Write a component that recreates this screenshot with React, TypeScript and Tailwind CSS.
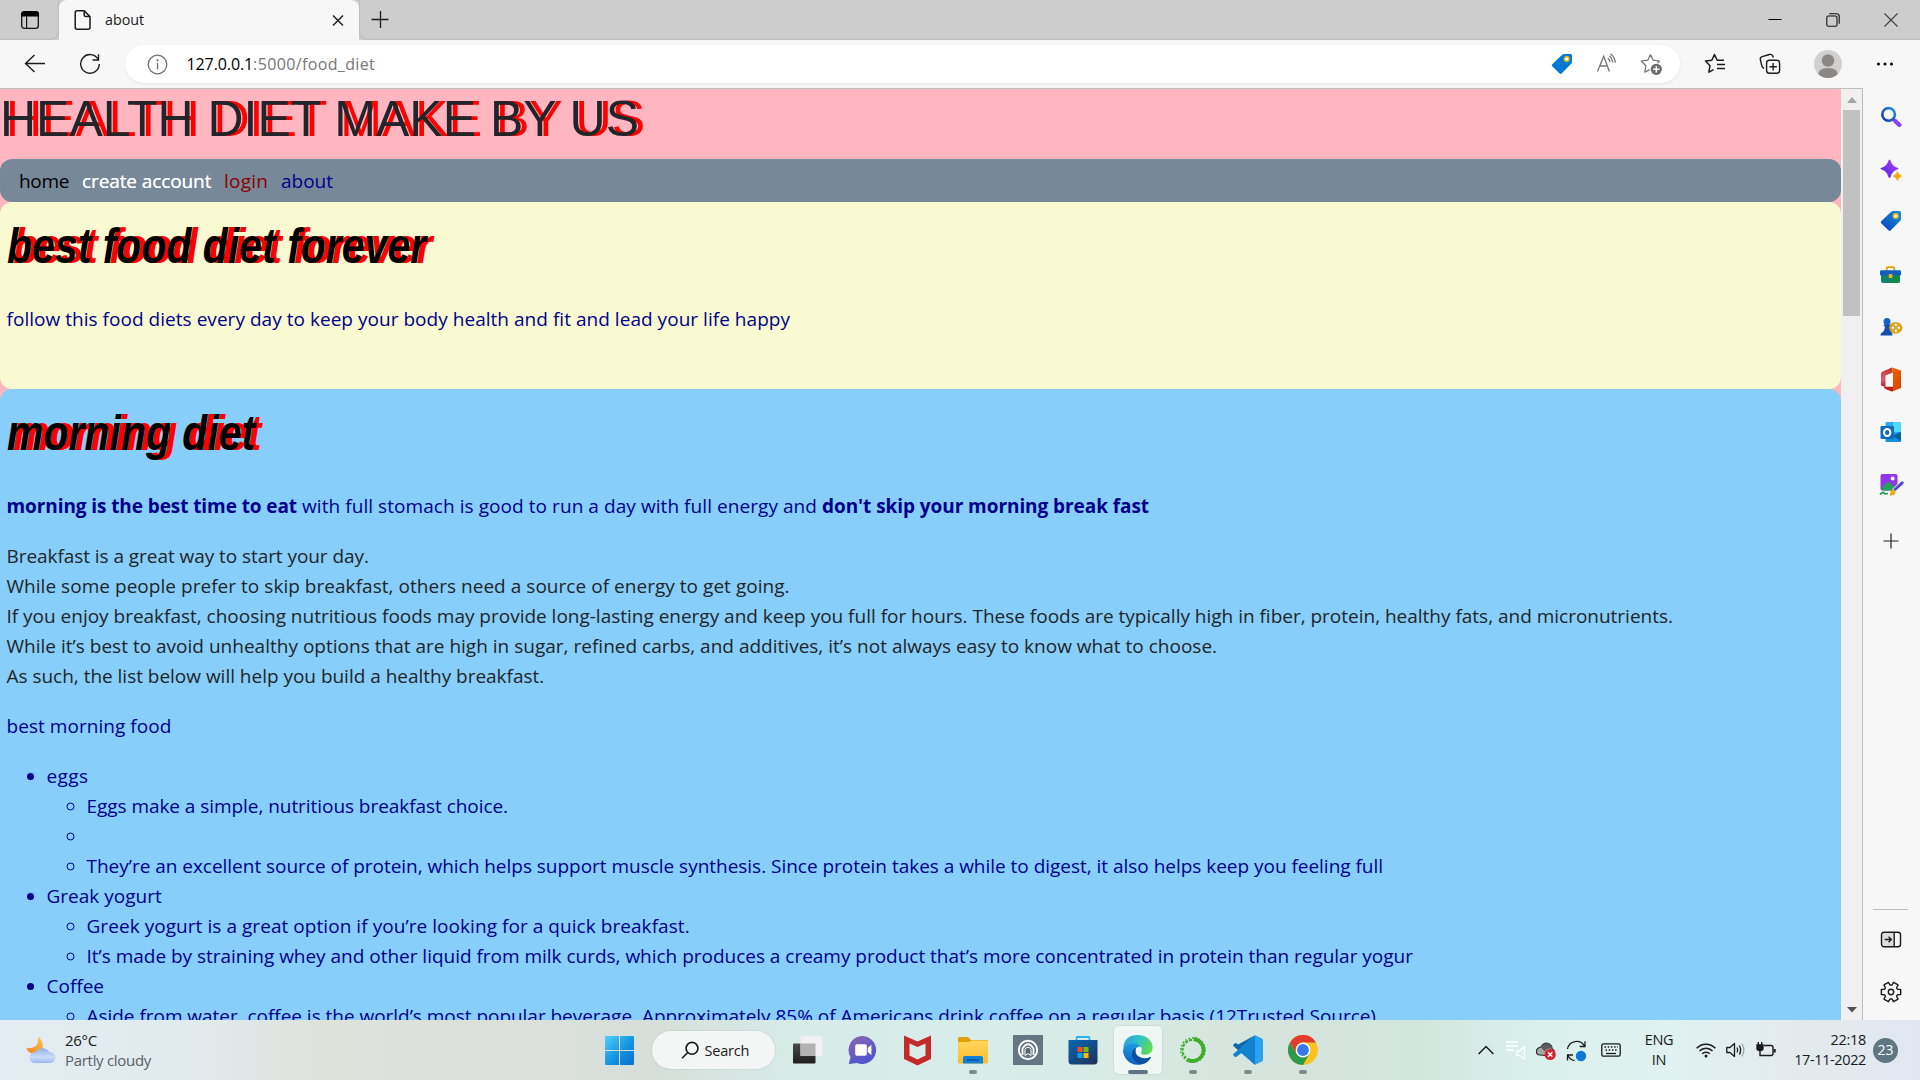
import type { ReactNode } from 'react';

const uiFont = "font-['Open_Sans','Noto_Sans',sans-serif]";

/* ---------- shared pieces ---------- */

function Tag({ from, to, id }: { from: string; to: string; id: string }) {
  return (
    <svg className="h-[22px] w-[22px]" viewBox="0 0 22 22">
      <defs>
        <linearGradient id={id} x1="0" y1="1" x2="1" y2="0">
          <stop offset="0" stopColor={from} />
          <stop offset="1" stopColor={to} />
        </linearGradient>
      </defs>
      <path d="M11.2 1.8Q12 1 13.2 1H19.5Q21 1 21 2.5V9Q21 10 20.2 10.8L10.6 20.6Q9.6 21.5 8.6 20.6L1.2 13.2Q.3 12.2 1.2 11.3Z" fill={`url(#${id})`} />
      <circle cx="15.7" cy="6" r="2.3" fill="#fff" stroke="#f5b70a" strokeWidth="1.5" />
    </svg>
  );
}

/* ---------- browser chrome ---------- */

function TabStrip() {
  return (
    <div className="flex h-10 shrink-0 items-stretch bg-[#cdcdcd]">
      <div className="flex w-[59px] items-center rounded-br-lg pl-[20px] shadow-[inset_-1px_-1px_1px_#bdbdbd]">
        <svg className="h-5 w-5" viewBox="0 0 20 20" fill="none">
          <rect x="1.7" y="1.7" width="16.6" height="16.6" rx="2.6" stroke="#111" strokeWidth="1.3" />
          <path d="M1.2 6.6V4Q1.2 1.2 4 1.2H16Q18.8 1.2 18.8 4V6.6Z" fill="#000" />
          <path d="M6.6 6V18" stroke="#111" strokeWidth="1.2" />
        </svg>
      </div>
      <div className="flex w-[300px] items-center rounded-t-lg bg-[#f7f7f7] pl-[15px]">
        <svg className="h-[22px] w-[18px]" viewBox="0 0 18 22" fill="none" stroke="#1b1b1b" strokeWidth="1.5" strokeLinejoin="round">
          <path d="M3.2 1.8H10.2L16 7.6V18.2Q16 20.2 14 20.2H3.2Q1.2 20.2 1.2 18.2V3.8Q1.2 1.8 3.2 1.8Z" />
          <path d="M10.2 1.8V6Q10.2 7.6 11.8 7.6H16" />
        </svg>
        <span className="ml-[13px] text-[14.3px] leading-5 text-[#1b1b1b]">about</span>
        <svg className="ml-auto mr-[15px] h-3 w-3" viewBox="0 0 12 12" stroke="#1b1b1b" strokeWidth="1.4">
          <path d="M1 1.5 11 11.5M11 1.5 1 11.5" />
        </svg>
      </div>
      <div className="flex flex-1 items-center rounded-bl-lg shadow-[inset_1px_-1px_1px_#bdbdbd]">
        <svg className="ml-[12px] h-[18px] w-[18px]" viewBox="0 0 18 18" stroke="#1b1b1b" strokeWidth="1.3">
          <path d="M9.5 0V17M.5 8.5H17.5" />
        </svg>
        <div className="ml-auto flex items-center gap-[44px] pr-[22px]">
          <svg className="h-[14px] w-[14px]" viewBox="0 0 14 14" stroke="#000" strokeWidth="1">
            <path d="M.5 6.5H13.5" />
          </svg>
          <svg className="h-[14px] w-[14px]" viewBox="0 0 14 14" fill="none" stroke="#111" strokeWidth="1.1">
            <rect x=".8" y="3" width="10.2" height="10.2" rx="1.5" />
            <path d="M3.2 .8H10.5Q13.2 .8 13.2 3.5V10.8" />
          </svg>
          <svg className="h-[14px] w-[14px]" viewBox="0 0 14 14" stroke="#444" strokeWidth="1.2">
            <path d="M.5 .5 13.5 13.5M13.5 .5 .5 13.5" />
          </svg>
        </div>
      </div>
    </div>
  );
}

const STAR =
  'M10.5 1.5 13.2 7.2 19.6 8.1M10.5 1.5 7.8 7.2 1.2 8.1 5.9 12.7 4.8 19.2 9.6 16.7';

function Toolbar() {
  return (
    <div className="flex h-12 shrink-0 items-center bg-[#f7f7f7]">
      <svg className="ml-[24px] h-[22px] w-[22px]" viewBox="0 0 22 22" fill="none" stroke="#1b1b1b" strokeWidth="1.4">
        <path d="M21 10.5H1.5M10.5 2 1.5 10.5 10.5 19" />
      </svg>
      <svg className="ml-[33px] h-[22px] w-[22px]" viewBox="0 0 22 22" fill="none" stroke="#1b1b1b" strokeWidth="1.4">
        <path d="M19.2 6.5A9.3 9.3 0 1 0 20.3 11" />
        <path d="M19.5 1.2V7H13.6" />
      </svg>
      <div className="ml-[24px] flex h-[38px] w-[1555px] items-center rounded-full bg-white shadow-[0_1px_3px_rgba(0,0,0,0.09)]">
        <svg className="ml-[22px] h-[21px] w-[21px]" viewBox="0 0 21 21" fill="none" stroke="#737373" strokeWidth="1.3">
          <circle cx="10.5" cy="10.5" r="9.3" />
          <path d="M10.5 9V15.3" />
          <circle cx="10.5" cy="6.3" r=".5" fill="#737373" />
        </svg>
        <span className="ml-[18.5px] text-[16px] leading-6 tracking-[-0.1px] text-black">127.0.0.1</span>
        <span className="text-[16px] leading-6 tracking-[0.36px] text-[#767676]">:5000/food_diet</span>
        <div className="ml-auto flex items-center pr-[17px]">
          <Tag id="tagBar" from="#0078d4" to="#0078d4" />
          <svg className="ml-[23px] h-[22px] w-[22px]" viewBox="0 0 22 22" fill="none" stroke="#767676" strokeWidth="1.3">
            <path d="M1.5 18.5 7.7 3.2 13.4 18.5M3.7 13H11.4" />
            <path d="M11.8 5Q13.6 6.6 14 9.2M13.4 2.8Q16.2 5.2 16.8 9.4M14.6 .8Q18.6 4 19.4 9.6" />
          </svg>
          <svg className="ml-[22px] h-[23px] w-[23px]" viewBox="0 0 23 23" fill="none" stroke="#767676" strokeWidth="1.3" strokeLinejoin="round">
            <path d={STAR} />
            <path d="M19.6 8.1 17.6 10" />
            <circle cx="16.3" cy="16.3" r="5.6" fill="#6e6e6e" stroke="none" />
            <path d="M16.3 13.2V19.4M13.2 16.3H19.4" stroke="#fff" strokeWidth="1.5" />
          </svg>
        </div>
      </div>
      <svg className="ml-[24px] h-[22px] w-[22px]" viewBox="0 0 22 22" fill="none" stroke="#1b1b1b" strokeWidth="1.5" strokeLinejoin="round">
        <path d="M20 7.2H13.2L10.5 1.5 7.8 7.2 1.5 8.1 6 12.7 4.9 19.2 9.6 16.7M13 11.5H21M13 15.5H21" />
      </svg>
      <svg className="ml-[33px] h-[22px] w-[22px]" viewBox="0 0 22 22" fill="none" stroke="#1b1b1b" strokeWidth="1.4">
        <rect x="7.6" y="7.2" width="13" height="13" rx="2.8" />
        <path d="M14.1 10V17.5M10.4 13.7H17.8" />
        <path d="M5.2 15.4Q3.4 15 2.8 12.6L1.4 6.8Q.9 4.4 3.2 3.7L10.4 1.5Q13 .9 13.9 3.3L14.3 4.6" />
      </svg>
      <svg className="ml-[33px] h-7 w-7" viewBox="0 0 28 28">
        <circle cx="14" cy="14" r="14" fill="#d2d0ce" />
        <circle cx="14" cy="10.5" r="6.2" fill="#8a8785" />
        <path d="M4.2 24Q5 18 14 18T23.8 24A14 14 0 0 1 4.2 24Z" fill="#8a8785" />
      </svg>
      <svg className="ml-[34px] h-1 w-[18px]" viewBox="0 0 18 4" fill="#111">
        <circle cx="2.5" cy="2" r="1.6" />
        <circle cx="9" cy="2" r="1.6" />
        <circle cx="15.5" cy="2" r="1.6" />
      </svg>
    </div>
  );
}

/* ---------- web page ---------- */

function SectionTitle({ children }: { children: ReactNode }) {
  return (
    <h1 className="h-[60px] text-black">
      <span className="inline-block origin-left scale-x-[0.82] whitespace-nowrap font-['Liberation_Sans',Arial,sans-serif] text-[50px] font-bold italic leading-[60px] [text-shadow:7.6px_0_0_red]">
        {children}
      </span>
    </h1>
  );
}

function SubList({ children }: { children: ReactNode }) {
  return <ul className="list-[circle] pl-10">{children}</ul>;
}

function PageContent() {
  return (
    <div className="flex-1 overflow-hidden bg-[#ffb6c1] text-[19px] leading-[30px] text-[#212529]">
      <h1 className="h-[70px] whitespace-nowrap font-['Liberation_Sans',Arial,sans-serif] text-[50px] leading-[60px] [text-shadow:6px_0_0_red]">
        HEALTH DIET MAKE BY US
      </h1>
      <nav className="flex h-[43px] items-center gap-[13px] rounded-[12px] bg-[#778899] pl-[19px]">
        <a className="w-[50px] tracking-[-0.3px] text-black">home</a>
        <a className="w-[129px] whitespace-nowrap tracking-[-0.1px] text-white [text-shadow:0_0_0.5px_white]">create account</a>
        <a className="w-[44px] tracking-[0.2px] text-[#8b0000]">login</a>
        <a className="text-[#00008b]">about</a>
      </nav>
      <section className="h-[187px] rounded-[12px] bg-[#fafad2] pl-[6.5px] pt-[14px] text-[#00008b]">
        <SectionTitle>best food diet forever</SectionTitle>
        <p className="mt-[28px] whitespace-nowrap tracking-[0.034px]">
          follow this food diets every day to keep your body health and fit and lead your life happy
        </p>
      </section>
      <section className="h-[700px] whitespace-nowrap rounded-[12px] bg-[#87cefa] pl-[6.5px] pt-[14px] text-[#00008b]">
        <SectionTitle>morning diet</SectionTitle>
        <p className="mt-[28px] tracking-[0.065px]">
          <b className="font-bold tracking-[-0.087px]">morning is the best time to eat</b> with full stomach is good to run a day with full energy and{' '}
          <b className="font-bold tracking-[-0.065px]">don't skip your morning break fast</b>
        </p>
        <div className="mt-5 text-[#212529]">
          <p className="tracking-[-0.06px]">Breakfast is a great way to start your day.</p>
          <p className="tracking-[0.036px]">While some people prefer to skip breakfast, others need a source of energy to get going.</p>
          <p className="tracking-[-0.012px]">
            If you enjoy breakfast, choosing nutritious foods may provide long-lasting energy and keep you full for hours. These foods are typically high in fiber, protein, healthy fats, and micronutrients.
          </p>
          <p className="tracking-[0.01px]">While it’s best to avoid unhealthy options that are high in sugar, refined carbs, and additives, it’s not always easy to know what to choose.</p>
          <p className="tracking-[-0.02px]">As such, the list below will help you build a healthy breakfast.</p>
        </div>
        <p className="mt-5 tracking-[0.05px]">best morning food</p>
        <ul className="mt-5 list-disc pl-10">
          <li>
            <span className="tracking-[0.4px]">eggs</span>
            <SubList>
              <li className="tracking-[-0.055px]">Eggs make a simple, nutritious breakfast choice.</li>
              <li className="h-[30px]" />
              <li className="tracking-[-0.024px]">
                They’re an excellent source of protein, which helps support muscle synthesis. Since protein takes a while to digest, it also helps keep you feeling full
              </li>
            </SubList>
          </li>
          <li>
            Greak yogurt
            <SubList>
              <li className="tracking-[0.055px]">Greek yogurt is a great option if you’re looking for a quick breakfast.</li>
              <li className="tracking-[-0.018px]">
                It’s made by straining whey and other liquid from milk curds, which produces a creamy product that’s more concentrated in protein than regular yogur
              </li>
            </SubList>
          </li>
          <li>
            Coffee
            <SubList>
              <li className="tracking-[-0.031px]">
                Aside from water, coffee is the world’s most popular beverage. Approximately 85% of Americans drink coffee on a regular basis (12Trusted Source)
              </li>
            </SubList>
          </li>
        </ul>
      </section>
    </div>
  );
}

function Scrollbar() {
  return (
    <div className="flex w-[21px] shrink-0 flex-col items-center bg-[#f0f0f0]">
      <svg className="mt-[8px] h-[6px] w-[10px]" viewBox="0 0 10 6" fill="#a3a3a3">
        <path d="M0 6 5 0 10 6Z" />
      </svg>
      <div className="mt-[7px] h-[206px] w-[17px] bg-[#c1c1c1]" />
      <svg className="mb-[7px] mt-auto h-[6px] w-[10px]" viewBox="0 0 10 6" fill="#505050">
        <path d="M0 0 5 5.5 10 0Z" />
      </svg>
    </div>
  );
}

/* ---------- right sidebar ---------- */

const sidebarIcons: ReactNode[] = [
  <svg className="mt-[1px] h-[22px] w-[22px]" viewBox="0 0 22 22" fill="none">
    <defs>
      <linearGradient id="lens" x1="0" y1="1" x2="1" y2="0">
        <stop stopColor="#0a35c8" />
        <stop offset="1" stopColor="#2b8fd0" />
      </linearGradient>
    </defs>
    <circle cx="8.6" cy="8.4" r="6.3" stroke="url(#lens)" strokeWidth="2.6" fill="#f3fbff" />
    <path d="M13.4 13.2 15.4 15" stroke="#3b3a50" strokeWidth="2.4" />
    <path d="M15.2 14.9 19.4 18.9" stroke="#8a3ffc" strokeWidth="4.2" strokeLinecap="round" />
  </svg>,
  <svg className="mt-[2px] h-[24px] w-[24px]" viewBox="0 0 24 24">
    <defs>
      <linearGradient id="spark" x1="0" y1="1" x2="1" y2="0">
        <stop stopColor="#4a2be0" />
        <stop offset="1" stopColor="#b43df5" />
      </linearGradient>
    </defs>
    <path d="M10.5 1.5Q11.3 1.5 11.8 3.2 13 8 18.4 9.8 20.8 10.6 18.4 11.6 13.2 13.3 12 18 11.4 20 10.5 20T9 18Q7.8 13.3 2.6 11.6 .2 10.7 2.6 9.8 8 8 9.2 3.2 9.7 1.5 10.5 1.5Z" fill="url(#spark)" />
    <path d="M18.4 13.5Q19 16.6 22.8 18 19.2 19.2 18.4 22.5 17.5 19.2 14 18 17.7 16.6 18.4 13.5Z" fill="#f2a900" stroke="#f2a900" strokeWidth=".6" />
  </svg>,
  <Tag id="tagSide" from="#0a3fc4" to="#1890d4" />,
  <svg className="mt-[2px] h-[20px] w-[23px]" viewBox="0 0 23 20">
    <path d="M7.7 6V3.5Q7.7 2.2 9 2.2H14Q15.3 2.2 15.3 3.5V6" stroke="#e3a008" strokeWidth="1.8" fill="none" />
    <path d="M2 9H21V16Q21 18 19 18H4Q2 18 2 16Z" fill="#10836a" />
    <path d="M12 9H21V16Q21 18 19 18H12Z" fill="#128a4a" />
    <rect x="1" y="5.3" width="21" height="5.2" rx="1.2" fill="#1160bd" />
    <rect x="9.8" y="9" width="3.6" height="4" rx=".8" fill="#f2b01e" />
  </svg>,
  <svg className="mt-[1px] h-[20px] w-[24px]" viewBox="0 0 24 20">
    <ellipse cx="16.5" cy="10.8" rx="7" ry="5.9" fill="#dda21f" />
    <g fill="#fff">
      <circle cx="16.8" cy="7.8" r="1.2" />
      <circle cx="16.8" cy="13.7" r="1.2" />
      <circle cx="13.9" cy="10.7" r="1.2" />
      <circle cx="19.7" cy="10.7" r="1.2" />
    </g>
    <circle cx="8" cy="4.5" r="3.5" fill="#1761c4" />
    <path d="M4.8 7.5H11.2V9.3H10Q10.2 13 12 15 13.5 15.5 13.5 18.5H1.5Q1.5 15.5 4 15 5.8 13 6 9.3H4.8Z" fill="#124fae" />
  </svg>,
  <svg className="mt-[2px] h-[25px] w-[22px]" viewBox="0 0 22 25">
    <defs>
      <linearGradient id="office" x1="0" y1="0" x2="0" y2="1">
        <stop stopColor="#c8301a" />
        <stop offset=".6" stopColor="#d9607a" />
        <stop offset="1" stopColor="#b81f1a" />
      </linearGradient>
      <linearGradient id="officeR" x1="0" y1="0" x2="1" y2="1">
        <stop stopColor="#f07800" />
        <stop offset="1" stopColor="#d83b01" />
      </linearGradient>
    </defs>
    <path d="M12 .5 2.7 4.5Q1 5.3 1 7V18.5L5.5 20V8.5L13 5.5Z" fill="url(#office)" />
    <path d="M12 .5 21 3.6V21L12 24.5 5 21.5H13V5Z" fill="url(#officeR)" />
    <path d="M4 19.8H13V24.3H11L4.5 21.5Z" fill="#b8201c" />
  </svg>,
  <svg className="mt-[1px] h-[22px] w-[22px]" viewBox="0 0 22 22">
    <rect x="5.5" y="1" width="15.5" height="17" rx="1" fill="#28a8ea" />
    <path d="M13 1H20Q21 1 21 2V11H13Z" fill="#50d9ff" />
    <path d="M5.5 14 21 11V20Q21 21 20 21H6.5Q5.5 21 5.5 20Z" fill="#1490df" />
    <path d="M13 15 21 11V20Z" fill="#0a5ea8" />
    <rect x="0.5" y="5" width="13.5" height="13" rx="1.2" fill="#0f6cbd" />
    <ellipse cx="7.2" cy="11.5" rx="3.2" ry="3.5" fill="none" stroke="#fff" strokeWidth="2" />
  </svg>,
  <svg className="ml-[1px] mt-[2px] h-[24px] w-[25px]" viewBox="0 0 25 24">
    <rect x="1.5" y="1" width="17" height="16.5" rx="2" fill="#9333ea" />
    <path d="M2.5 15 7.5 10Q9.5 8.5 11.5 10L16 14.5V17.5H3.5Z" fill="#22a35a" />
    <circle cx="13.7" cy="5.5" r="2" fill="#fff" />
    <path d="M23 10 15 18" stroke="#f7f7f7" strokeWidth="5" />
    <path d="M23.2 9.8 16 16.5" stroke="#5546d8" strokeWidth="3" strokeLinecap="round" />
    <path d="M13.5 16.5Q16.5 16.5 16.5 19.5 16 23 10.5 22.5 11.5 17.5 13.5 16.5Z" fill="#f2a51e" />
    <path d="M1 21.5Q4 18.5 5 20T9 20.5" stroke="#16a34a" strokeWidth="1.8" fill="none" />
  </svg>,
  <svg className="mt-[9px] h-4 w-4" viewBox="0 0 16 16" stroke="#222" strokeWidth="1.2">
    <path d="M8 .5V15.5M.5 8H15.5" />
  </svg>,
];

function gearPath() {
  const pts: string[] = [];
  for (let i = 0; i < 6; i++) {
    const a = (i * 60 * Math.PI) / 180 + Math.PI / 6;
    const at = (r: number, off: number) =>
      `${(11 + r * Math.sin(a + off)).toFixed(2)} ${(11 - r * Math.cos(a + off)).toFixed(2)}`;
    pts.push(at(7, -0.4), at(10, -0.26), at(10, 0.26), at(7, 0.4));
  }
  return `M${pts.join('L')}Z`;
}

function Sidebar() {
  return (
    <aside className="flex w-[57px] shrink-0 flex-col items-center bg-[#f7f7f7] pr-[2px]">
      <div className="mt-[2px] flex flex-col">
        {sidebarIcons.map((icon, i) => (
          <div key={i} className="flex h-[52.5px] w-[55px] items-center justify-center">
            {icon}
          </div>
        ))}
      </div>
      <div className="mt-auto h-px w-[35px] bg-[#bcbcbc]" />
      <svg className="mt-[21px] h-[17px] w-[22px]" viewBox="0 0 22 17" fill="none">
        <rect x="1.5" y="1.2" width="12.5" height="14.5" rx="2" fill="#ddd" />
        <rect x="1.5" y="1.2" width="19" height="14.5" rx="2.5" stroke="#1b1b1b" strokeWidth="1.4" />
        <path d="M14.2 1V16M4.8 8.5H11.2M8.6 5.8 11.3 8.5 8.6 11.2" stroke="#1b1b1b" strokeWidth="1.4" />
      </svg>
      <svg className="mb-[17px] mt-[33px] h-[22px] w-[22px]" viewBox="0 0 22 22" fill="none" stroke="#1b1b1b" strokeWidth="1.4" strokeLinejoin="round">
        <path d={gearPath()} />
        <circle cx="11" cy="11" r="2.7" />
      </svg>
    </aside>
  );
}

/* ---------- taskbar ---------- */

type TaskApp = { name: string; icon: ReactNode; running?: boolean; active?: boolean };

const apps: TaskApp[] = [
  {
    name: 'Task view',
    icon: (
      <svg className="h-[30px] w-[30px]" viewBox="0 0 30 30">
        <defs>
          <linearGradient id="tvDark" x1="0" y1="0" x2="0" y2="1">
            <stop stopColor="#4a4a48" />
            <stop offset="1" stopColor="#1e1e1e" />
          </linearGradient>
        </defs>
        <rect x="0" y="8.5" width="22.5" height="20" rx="1" fill="url(#tvDark)" />
        <rect x="7.5" y="1" width="22" height="20" rx="1" fill="#f1f1f1" />
        <rect x="7.5" y="8.5" width="15" height="12.5" fill="#b2b2b2" />
      </svg>
    ),
  },
  {
    name: 'Chat',
    icon: (
      <svg className="h-[30px] w-[30px]" viewBox="0 0 30 30">
        <defs>
          <linearGradient id="chat" x1="0" y1="0" x2=".5" y2="1">
            <stop stopColor="#8a66b0" />
            <stop offset="1" stopColor="#4f55cf" />
          </linearGradient>
        </defs>
        <path d="M15 1A14 14 0 1 1 9 28L1.500 29Q.5 29 1 28L2.500 22A14 14 0 0 1 15 1Z" fill="url(#chat)" />
        <rect x="7.2" y="9.2" width="11.6" height="11.6" rx="1.8" fill="#fff" />
        <path d="M19.8 13 23.4 9.8V20.2L19.8 17Z" fill="#fff" />
      </svg>
    ),
  },
  {
    name: 'McAfee',
    icon: (
      <svg className="h-[31px] w-[27px]" viewBox="0 0 27 31">
        <path d="M0 .5 13.5 6.5 27 .5V24L13.5 30.5 0 24Z" fill="#c32b2b" />
        <path d="M5.5 8.5 13.5 12 21.5 8.5V20.5L13.5 24.5 5.5 20.5Z" fill="#d9ece9" />
      </svg>
    ),
  },
  {
    name: 'Explorer',
    running: true,
    icon: (
      <svg className="h-[28px] w-[30px]" viewBox="0 0 30 28">
        <defs>
          <linearGradient id="folder" x1="0" y1="0" x2="0" y2="1">
            <stop stopColor="#ffd65e" />
            <stop offset="1" stopColor="#fbbc2c" />
          </linearGradient>
        </defs>
        <path d="M0 2Q0 1 1 1H10L13 4H29Q30 4 30 5V10H0Z" fill="#e0a008" />
        <path d="M0 6H11L14 4.5H29Q30 4.5 30 5.5V26Q30 27.5 28.5 27.5H1.5Q0 27.5 0 26Z" fill="url(#folder)" />
        <path d="M5 27.5V22Q5 20 7 20H23Q25 20 25 22V27.5Z" fill="#1180d8" />
        <path d="M9 24H21" stroke="#0a4f94" strokeWidth="1.5" />
      </svg>
    ),
  },
  {
    name: 'Headset',
    icon: (
      <svg className="h-[30px] w-[30px]" viewBox="0 0 30 30">
        <rect width="30" height="30" fill="#637682" />
        <circle cx="15" cy="15" r="9.2" fill="none" stroke="#fff" strokeWidth="1.9" />
        <path d="M9.5 20V13.5L12 10.500Q15 8 18 10.500L20.500 13.500V20" fill="none" stroke="#fff" strokeWidth="1.8" />
        <path d="M12 20.500V14.500Q12 12.500 15 12.500T18 14.500V20.500L15 18.500Z" fill="#52646f" stroke="#fff" strokeWidth="1" />
      </svg>
    ),
  },
  {
    name: 'Store',
    icon: (
      <svg className="h-[30px] w-[30px]" viewBox="0 0 30 30">
        <defs>
          <linearGradient id="store" x1="0" y1="0" x2=".8" y2="1">
            <stop stopColor="#0669b8" />
            <stop offset="1" stopColor="#20335e" />
          </linearGradient>
        </defs>
        <path d="M8.5 6V3Q8.5 2 9.5 2H20.5Q21.5 2 21.5 3V6" fill="none" stroke="#28b4f0" strokeWidth="1.8" />
        <path d="M.5 5H29.5V26Q29.5 29.5 26 29.5H4Q.5 29.5 .5 26Z" fill="url(#store)" />
        <rect x="9.5" y="12" width="5" height="5" fill="#f25022" />
        <rect x="15.5" y="12" width="5" height="5" fill="#7fba00" />
        <rect x="9.5" y="18" width="5" height="5" fill="#00a4ef" />
        <rect x="15.5" y="18" width="5" height="5" fill="#ffb900" />
      </svg>
    ),
  },
  {
    name: 'Edge',
    running: true,
    active: true,
    icon: (
      <svg className="h-[30px] w-[30px]" viewBox="0 0 30 30">
        <defs>
          <linearGradient id="edgeTop" x1="0" y1=".3" x2="1" y2=".6">
            <stop stopColor="#2a9fe0" />
            <stop offset=".5" stopColor="#33c4c0" />
            <stop offset="1" stopColor="#62dd4c" />
          </linearGradient>
          <linearGradient id="edgeLeft" x1="0" y1="0" x2="0" y2="1">
            <stop stopColor="#1f9be4" />
            <stop offset="1" stopColor="#0b62bd" />
          </linearGradient>
        </defs>
        <path d="M.2 13Q1.5 0 15 0 24 0 28.2 7 31.5 14 27.5 17.8 24 21 19 19.2 17.5 18.5 18.3 17 20 13.5 17 11 12 7.5 6 8.5 2 9.5 .2 13Z" fill="url(#edgeTop)" />
        <path d="M0 15.5Q.5 8 9 8 15.5 8.3 17.8 11.6 11 12 11 18.5 11.5 26 19 29.3 9 31.5 3 24 -.2 19.5 0 15.5Z" fill="url(#edgeLeft)" />
        <path d="M11.5 13.5Q8 17 9.5 22 12.5 28.8 19 29.3 25 28 28 22.5 28.3 21.5 27.3 21.9 21 25 15 21 11.5 18 13 13 12 13 11.5 13.5Z" fill="#0c4fa0" />
      </svg>
    ),
  },
  {
    name: 'Anaconda',
    running: true,
    icon: (
      <svg className="h-[28px] w-[28px]" viewBox="0 0 28 28" fill="none" stroke="#3fae29">
        <path d="M14.5 3A11 11 0 1 1 8 23.5" strokeWidth="3.8" />
        <circle cx="14" cy="14" r="12.2" strokeWidth="1.6" strokeDasharray="1.5 2" />
        <path d="M13 3.8A10.4 10.4 0 0 0 7 22" strokeWidth="2.2" strokeDasharray="3 1.3" />
      </svg>
    ),
  },
  {
    name: 'Code',
    running: true,
    icon: (
      <svg className="h-[30px] w-[30px]" viewBox="0 0 30 30">
        <path d="M22 .3 8.8 12.3 3.5 8.3Q2.5 7.7 1.5 8.5L.5 9.5Q-.2 10.3.6 11.2L22 29.7V21.5L5 9.5Z" fill="#0a68b0" />
        <path d="M22 29.7 8.8 17.7 3.5 21.7Q2.5 22.3 1.5 21.5L.5 20.5Q-.2 19.7.6 18.8L22 .3V8.5Z" fill="#1282cf" />
        <path d="M22 .3 29 3.5Q30 4 30 5.2V24.8Q30 26 29 26.5L22 29.7Z" fill="#2aa2f2" />
      </svg>
    ),
  },
  {
    name: 'Chrome',
    running: true,
    icon: (
      <svg className="h-[30px] w-[30px]" viewBox="0 0 30 30">
        <circle cx="15" cy="15" r="15" fill="#fcc31e" />
        <path d="M2 7.5A15 15 0 0 0 15 30L21.5 18.8 8.5 18.8Z" fill="#2b9a4b" />
        <path d="M2 7.5A15 15 0 0 1 28 7.5H15L8.5 18.8Z" fill="#e33b2e" />
        <circle cx="15" cy="15" r="7.4" fill="#fff" />
        <circle cx="15" cy="15" r="5.9" fill="#3579ea" />
      </svg>
    ),
  },
];

function Taskbar() {
  return (
    <footer className="flex h-[60px] shrink-0 items-center bg-[linear-gradient(90deg,#e3ecf2_0%,#e1eaed_10%,#dfe1db_17%,#dde0da_26%,#d6dfda_34%,#d7ece8_42%,#d8ede9_50%,#d8ebe5_58%,#d5e4dc_66%,#d3e6de_74%,#daf0ec_80%,#dff1f0_87%,#e3ebee_93%,#e1e7f1_100%)] text-[#1b1b1b]">
      <div className="flex w-[605px] items-center pl-[26px]">
        <svg className="h-[28px] w-[30px]" viewBox="0 0 30 28">
          <defs>
            <linearGradient id="moon" x1="0" y1="1" x2="1" y2="0">
              <stop stopColor="#f08418" />
              <stop offset="1" stopColor="#fbc558" />
            </linearGradient>
            <linearGradient id="cloud" x1="0" y1="0" x2="0" y2="1">
              <stop stopColor="#8fb0ec" />
              <stop offset=".6" stopColor="#cddcf8" />
              <stop offset="1" stopColor="#9bb8ee" />
            </linearGradient>
          </defs>
          <path d="M12 1Q13 8 9 10.5 5 13 .3 12 2 17.5 8 17.8 16 17.5 17 10 16.5 3.5 12 1Z" fill="url(#moon)" />
          <path d="M9 27A5.5 5.5 0 0 1 9 16H9.8A8 8 0 0 1 23.5 16.2 5.4 5.4 0 0 1 24.500 27Z" fill="url(#cloud)" />
        </svg>
        <div className="ml-[9px] text-[15px] leading-5">
          <p className="tracking-[-0.3px]">26°C</p>
          <p className="tracking-[-0.3px] text-[#5c6164]">Partly cloudy</p>
        </div>
      </div>
      <svg className="mt-px h-[29px] w-[29px]" viewBox="0 0 29 29">
        <defs>
          <linearGradient id="win" x1="0" y1="0" x2="1" y2="1">
            <stop stopColor="#52d0fb" />
            <stop offset=".55" stopColor="#1492df" />
            <stop offset="1" stopColor="#0a6fd0" />
          </linearGradient>
        </defs>
        <path d="M1 0H14V14H0V1Q0 0 1 0ZM15 0H28Q29 0 29 1V14H15ZM0 15H14V29H1Q0 29 0 28ZM15 15H29V28Q29 29 28 29H15Z" fill="url(#win)" />
      </svg>
      <div className="ml-[18px] flex h-[38px] w-[123px] items-center rounded-full bg-[#f3f6f5] pl-[28.5px] shadow-[0_0_1px_1px_rgba(0,0,0,0.05)]">
        <svg className="h-[18px] w-[18px]" viewBox="0 0 18 18" fill="none" stroke="#1b1b1b" strokeWidth="1.6">
          <circle cx="11" cy="7.3" r="5.9" />
          <path d="M6.8 11.5 1 17.2" />
        </svg>
        <span className="ml-[6px] pt-[2px] text-[14.5px] tracking-[-0.2px]">Search</span>
      </div>
      <div className="ml-[5px] flex">
        {apps.map((app) => (
          <div key={app.name} className="flex w-[55px] justify-center">
            <div
              className={
                app.active
                  ? 'relative flex h-[48px] w-[48px] items-center justify-center rounded-[5px] bg-[#eff7f5] shadow-[0_0_1px_1px_rgba(0,0,0,0.05)]'
                  : 'relative flex h-[48px] w-[48px] items-center justify-center'
              }
            >
              {app.icon}
              {app.running && (
                <span
                  className={
                    app.active
                      ? 'absolute bottom-0 left-[14px] h-1 w-5 rounded-full bg-[#5f7585]'
                      : 'absolute bottom-0 left-5 h-1 w-2 rounded-full bg-[#808a88]'
                  }
                />
              )}
            </div>
          </div>
        ))}
      </div>
      <div className="ml-auto flex items-center pr-[22px]">
        <svg className="h-[10px] w-[16px]" viewBox="0 0 16 10" fill="none" stroke="#1b1b1b" strokeWidth="1.5">
          <path d="M.6 9 8 1.5 15.4 9" />
        </svg>
        <svg className="ml-[12px] h-[20px] w-[20px]" viewBox="0 0 20 20" fill="none" stroke="#fff" strokeWidth="1.3">
          <path d="M0 2H12M0 6H12M0 10H8M11 11H13.5L18.5 6.5V19L13.5 15.5H11Z" />
        </svg>
        <svg className="ml-[10px] mt-[2px] h-[20px] w-[20px]" viewBox="0 0 20 20">
          <path d="M4 14Q0 14 .5 9.5 1.5 6.5 5 6 8 1 12.5 2.5 16 4 16 7.5 19 9 18 13L14 15Z" fill="#a8a8a8" stroke="#2a2a2a" strokeWidth="1.2" />
          <path d="M5 6Q8 1 12.5 2.5 16 4 16 7.5 10 7 8.5 10.5Z" fill="#5c5c5c" />
          <circle cx="14.2" cy="13.5" r="5.6" fill="#d9202e" />
          <path d="M12 11.3 16.4 15.7M16.4 11.3 12 15.7" stroke="#fff" strokeWidth="1.5" />
        </svg>
        <svg className="ml-[10px] mt-[1px] h-[22px] w-[21px]" viewBox="0 0 21 22" fill="none" stroke="#1b1b1b" strokeWidth="1.3">
          <path d="M1.5 9A9.2 9.2 0 0 1 18.5 6M19 1.2V6.5H13.7M1.5 20.5V15H7M2 15.5Q4 19.8 8.5 20.6" />
          <circle cx="15" cy="16" r="5.2" fill="#0a78d4" stroke="none" />
        </svg>
        <svg className="ml-[14px] h-[14px] w-[20px]" viewBox="0 0 20 14" fill="none" stroke="#1b1b1b" strokeWidth="1.3">
          <rect x=".8" y=".8" width="18.4" height="12.4" rx="1.6" />
          <path d="M3.5 4H17M4.5 7H16.5" strokeDasharray="1.5 1.7" />
          <path d="M5 10.5H15" />
        </svg>
        <div className="ml-[14px] w-[48px] text-center text-[14.5px] leading-5 tracking-[-0.3px]">
          <p>ENG</p>
          <p>IN</p>
        </div>
        <svg className="ml-[13px] h-[16px] w-[20px]" viewBox="0 0 20 16" fill="none" stroke="#1b1b1b" strokeWidth="1.5">
          <path d="M.6 6.2A13 13 0 0 1 19.4 6.2M3.5 9A9 9 0 0 1 16.5 9M6.2 11.8A5.3 5.3 0 0 1 13.8 11.8" />
          <circle cx="10" cy="13.9" r="1.5" fill="#1b1b1b" stroke="none" />
        </svg>
        <svg className="ml-[10px] h-[18px] w-[20px]" viewBox="0 0 20 18" fill="none" stroke="#1b1b1b" strokeWidth="1.3">
          <path d="M.8 6.5H4L8.5 2.5V15.5L4 11.5H.8Z" strokeLinejoin="round" />
          <path d="M11 6.5Q12.5 9 11 11.5M13.3 4.5Q16 9 13.3 13.5" />
          <path d="M15.7 2.5Q20 9 15.7 15.5" stroke="#9aa5a5" />
        </svg>
        <svg className="ml-[10px] h-[16px] w-[20px]" viewBox="0 0 20 16" fill="none" stroke="#1b1b1b" strokeWidth="1.4">
          <path d="M8 3.5H15Q17 3.5 17 5.5V11.5Q17 13.5 15 13.5H4V9" />
          <path d="M18.7 7V10.5" strokeWidth="2" />
          <path d="M1 3H7V6.5Q7 8.5 4 8.5T1 6.5Z" fill="#1b1b1b" />
          <path d="M2.3 0V3M5.7 0V3" />
        </svg>
        <div className="ml-[4px] w-[86px] text-right text-[14.5px] leading-5">
          <p className="tracking-[-0.3px]">22:18</p>
          <p className="tracking-[-0.38px]">17-11-2022</p>
        </div>
        <div className="ml-[7px] flex h-[25px] w-[25px] items-center justify-center rounded-full bg-[#5f7683] text-[14px] leading-none text-white">
          23
        </div>
      </div>
    </footer>
  );
}

export default function App() {
  return (
    <div className={`flex h-[1080px] w-[1920px] flex-col overflow-hidden ${uiFont}`}>
      <TabStrip />
      <Toolbar />
      <div className="flex min-h-0 flex-1">
        <div className="flex min-w-0 flex-1 border-r border-t border-[#bdbdbd]">
          <PageContent />
          <Scrollbar />
        </div>
        <Sidebar />
      </div>
      <Taskbar />
    </div>
  );
}
